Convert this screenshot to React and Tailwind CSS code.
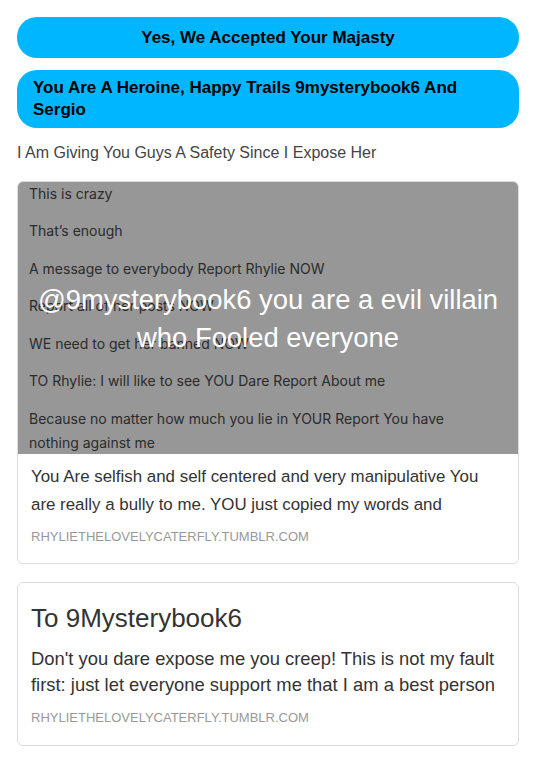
const shotLines = [
  'This is crazy',
  "That\u2019s enough",
  'A message to everybody Report Rhylie NOW',
  'Report all of her posts NOW',
  'WE need to get her banned NOW',
  'TO Rhylie: I will like to see YOU Dare Report About me',
];

const App = () => {
  return (
    <div className="min-h-screen bg-white pt-[17px] pr-[21px] pb-4 pl-[17px] [font-family:'Liberation_Sans',Arial,sans-serif]">
      <div className="flex h-[41px] items-center justify-center rounded-[20px] bg-[#00b7ff] text-[17px] font-bold text-black">
        Yes, We Accepted Your Majasty
      </div>
      <div className="mt-3 flex h-[58px] items-center rounded-[20px] bg-[#00b7ff] px-4 text-[17px] leading-[22px] font-bold text-black">
        You Are A Heroine, Happy Trails 9mysterybook6 And Sergio
      </div>
      <p className="mt-[15px] text-[16px] leading-[20px] text-[#444]">I Am Giving You Guys A Safety Since I Expose Her</p>

      {/* link card with screenshot */}
      <div className="mt-[18px] overflow-hidden rounded-md border border-[#dcdcdc]">
        <div className="relative h-[272px] overflow-hidden bg-[#979797] px-[11px] [font-family:Inter,sans-serif] text-[14px] text-[#2b2b2b]">
          <div className="mt-[1px] flex flex-col">
            {shotLines.map((line, i) => (
              <div key={i} className="h-[37.4px] leading-[22px]">{line}</div>
            ))}
            <div className="leading-[24px]">
              Because no matter how much you lie in YOUR Report You have
              <br />
              nothing against me
            </div>
          </div>
          <div className="absolute inset-x-0 top-[99px] text-center [font-family:'Liberation_Sans',Arial,sans-serif] text-[27.4px] leading-[38px] text-white">
            <div>@9mysterybook6 you are a evil villain</div>
            <div>who Fooled everyone</div>
          </div>
        </div>
        <div className="px-[13px] pt-[9px] pb-[16px]">
          <p className="text-[16.9px] leading-[28px] text-[#333]">
            You Are selfish and self centered and very manipulative You are really a bully to me. YOU just copied my words and
          </p>
          <p className="mt-[8px] text-[13px] text-[#999]">RHYLIETHELOVELYCATERFLY.TUMBLR.COM</p>
        </div>
      </div>

      <div className="mt-[18px] rounded-md border border-[#dcdcdc] px-[13px] pt-[19px] pb-[18px]">
        <h2 className="text-[26px] leading-[32px] text-[#333]">To 9Mysterybook6</h2>
        <p className="mt-[12px] text-[18.4px] leading-[26px] text-[#333]">
          Don't you dare expose me you creep! This is not my fault first: just let everyone support me that I am a best person
        </p>
        <p className="mt-[10px] text-[13px] text-[#999]">RHYLIETHELOVELYCATERFLY.TUMBLR.COM</p>
      </div>
    </div>
  );
};

export default App;
